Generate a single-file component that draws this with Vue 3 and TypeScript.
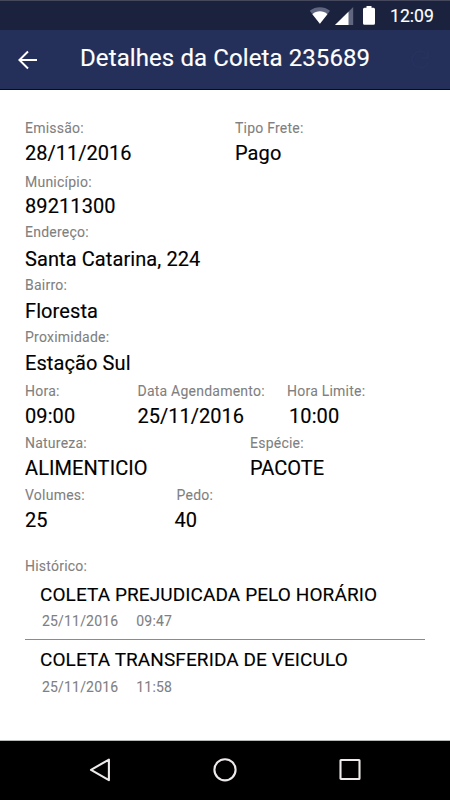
<script setup lang="ts">
interface Field {
  label: string
  value: string
  kind?: string
}
interface Row {
  name: string
  fields: Field[]
}
interface HistoryItem {
  title: string
  date: string
  time: string
}

const rows: Row[] = [
  { name: 'issue', fields: [{ label: 'Emissão:', value: '28/11/2016', kind: 'date' }, { label: 'Tipo Frete:', value: 'Pago' }] },
  { name: 'city', fields: [{ label: 'Município:', value: '89211300' }] },
  { name: 'address', fields: [{ label: 'Endereço:', value: 'Santa Catarina, 224' }] },
  { name: 'district', fields: [{ label: 'Bairro:', value: 'Floresta' }] },
  { name: 'near', fields: [{ label: 'Proximidade:', value: 'Estação Sul' }] },
  {
    name: 'schedule',
    fields: [
      { label: 'Hora:', value: '09:00' },
      { label: 'Data Agendamento:', value: '25/11/2016', kind: 'date' },
      { label: 'Hora Limite:', value: '10:00', kind: 'limit' },
    ],
  },
  { name: 'nature', fields: [{ label: 'Natureza:', value: 'ALIMENTICIO' }, { label: 'Espécie:', value: 'PACOTE', kind: 'tight' }] },
  { name: 'volumes', fields: [{ label: 'Volumes:', value: '25' }, { label: 'Pedo:', value: '40', kind: 'weight' }] },
]

const history: HistoryItem[] = [
  { title: 'COLETA PREJUDICADA PELO HORÁRIO', date: '25/11/2016', time: '09:47' },
  { title: 'COLETA TRANSFERIDA DE VEICULO', date: '25/11/2016', time: '11:58' },
]
</script>

<template>
  <div class="screen">
    <div class="status">
      <svg class="wifi" width="22" height="18" viewBox="0 0 22 18">
        <path d="M0.8 4.8C6.8 .2 15 .2 21 4.8L18.2 8.4L10.9 17.8L3.6 8.4Z" fill="#616680" />
        <path d="M3.4 8.2C7.6 4.4 14.2 4.4 18.4 8.2L10.9 17.8Z" fill="#fff" />
      </svg>
      <svg class="signal" width="19" height="18" viewBox="0 0 19 18">
        <path d="M0 18L18.2 0V18Z" fill="#616680" />
        <path d="M0 18L13.5 4.7V18Z" fill="#fff" />
      </svg>
      <svg class="battery" width="12" height="19" viewBox="0 0 12 19">
        <path d="M3.5 0h5v1.8h2q1.5 0 1.5 1.5v14q0 1.5-1.5 1.5h-9Q0 18.8 0 17.3v-14Q0 1.8 1.5 1.8h2z" fill="#fff" />
      </svg>
      <span class="clock">12:09</span>
    </div>
    <header class="bar">
      <svg class="back" width="20" height="20" viewBox="0 0 20 20" fill="none" stroke="#fff" stroke-width="2">
        <path d="M19 10H1.5M10 1.5L1.4 10L10 18.5" />
      </svg>
      <h1 class="title">Detalhes da Coleta 235689</h1>
      <svg class="refresh" width="20" height="20" viewBox="0 0 20 20" fill="none" stroke="#27315d" stroke-width="2">
        <path d="M17 4.5A8.3 8.3 0 1 0 18.3 12M18 1v7h-7" />
      </svg>
    </header>
    <main class="content">
      <section class="details">
        <div v-for="row in rows" :key="row.name" class="row" :class="row.name">
          <div v-for="f in row.fields" :key="f.label" class="field">
            <span class="label">{{ f.label }}</span>
            <span class="value" :class="f.kind">{{ f.value }}</span>
          </div>
        </div>
      </section>
      <section class="history">
        <span class="label">Histórico:</span>
        <ul class="list">
          <li v-for="h in history" :key="h.time" class="item">
            <span class="event">{{ h.title }}</span>
            <span class="when"><span>{{ h.date }}</span><span>{{ h.time }}</span></span>
          </li>
        </ul>
      </section>
    </main>
    <nav class="nav">
      <svg width="24" height="24" viewBox="0 0 24 24"><path d="M20.9 1.6V22.2L3 11.8Z" /></svg>
      <svg width="24" height="24" viewBox="0 0 24 24"><circle cx="12" cy="11.8" r="10.6" /></svg>
      <svg width="24" height="24" viewBox="0 0 24 24"><rect x="2.5" y="2" width="19" height="19" rx=".5" /></svg>
    </nav>
  </div>
</template>

<style>
body {
  margin: 0;
}
</style>

<style scoped>
.screen {
  display: flex;
  flex-direction: column;
  width: 450px;
  height: 800px;
  overflow: hidden;
  background: #fff;
  color: #000;
  font-family: Roboto, sans-serif;
}
.status {
  box-sizing: border-box;
  display: flex;
  flex: none;
  height: 30px;
  padding: 5px 16px 0 0;
  justify-content: flex-end;
  align-items: flex-start;
  border-top: 1px solid #45485c;
  background: #1b223e;
  color: #fff;
}
.wifi {
  margin-right: 4px;
}
.signal {
  margin: 1px 9px 0 0;
}
.battery {
  margin-right: 15px;
}
.clock {
  width: 44px;
  font-size: 17.6px;
  line-height: 20px;
  white-space: nowrap;
  -webkit-text-stroke: 0.15px currentColor;
}
.bar {
  box-sizing: border-box;
  display: flex;
  flex: none;
  height: 60px;
  padding: 0 20px 0 18px;
  border-bottom: 1px solid #0c0633;
  background: #242f5a;
}
.back {
  margin: 20px 42px 0 0;
}
.refresh {
  margin: 20px 0 0 auto;
}
.title {
  margin: 12px 0 0;
  color: #fff;
  font-size: 24px;
  font-weight: 400;
  letter-spacing: 0.1px;
  line-height: 32px;
  white-space: nowrap;
  -webkit-text-stroke: 0.15px currentColor;
}
.content {
  box-sizing: border-box;
  flex: 1;
  padding: 29px 25px 0;
}
.details {
  display: grid;
  grid-template-rows: 55px 50px 53px 52px 53px 52px 53px 71px;
}
.row {
  display: grid;
}
.issue {
  grid-template-columns: 210px 1fr;
}
.schedule {
  grid-template-columns: 112.5px 149.5px 1fr;
}
.nature {
  grid-template-columns: 225px 1fr;
}
.volumes {
  grid-template-columns: 151.5px 1fr;
}
.field {
  display: flex;
  flex-direction: column;
  gap: 6px;
  white-space: nowrap;
}
.issue .field,
.schedule .field,
.nature .field {
  gap: 5px;
  padding-top: 1px;
}
.city .field {
  gap: 4px;
}
.address .field {
  gap: 7px;
}
.volumes .field {
  gap: 5px;
}
.label {
  display: block;
  color: #808080;
  font-size: 14px;
  letter-spacing: 0.23px;
  line-height: 16px;
  -webkit-text-stroke: 0.08px currentColor;
}
.value {
  font-size: 20px;
  letter-spacing: 0.09px;
  line-height: 24px;
  -webkit-text-stroke: 0.15px currentColor;
}
.date,
.tight {
  letter-spacing: 0;
}
.limit {
  margin-left: 2px;
}
.weight {
  margin-left: -2px;
}
.list {
  margin: 9px 0 0;
  padding: 0;
  list-style: none;
}
.item {
  box-sizing: border-box;
  height: 66px;
  padding-left: 15px;
  white-space: nowrap;
}
.item:first-child {
  height: 57px;
  border-bottom: 1px solid #8b8b8b;
}
.item:last-child {
  padding-top: 8px;
}
.event {
  display: block;
  font-size: 19px;
  letter-spacing: 0.09px;
  line-height: 24px;
  -webkit-text-stroke: 0.12px currentColor;
}
.when {
  display: flex;
  gap: 18px;
  margin: 6px 0 0 2px;
  color: #808080;
  font-size: 14px;
  letter-spacing: 0.18px;
  line-height: 16px;
  -webkit-text-stroke: 0.08px currentColor;
}
.item:last-child .when {
  margin-top: 7px;
}
.nav {
  box-sizing: border-box;
  display: flex;
  flex: none;
  justify-content: space-between;
  height: 60px;
  padding: 17px 88px 0;
  border-top: 1px solid #b5bab9;
  background: #000;
}
.nav svg {
  fill: none;
  stroke: #eeeaea;
  stroke-width: 2.1;
  stroke-linejoin: round;
}
</style>
